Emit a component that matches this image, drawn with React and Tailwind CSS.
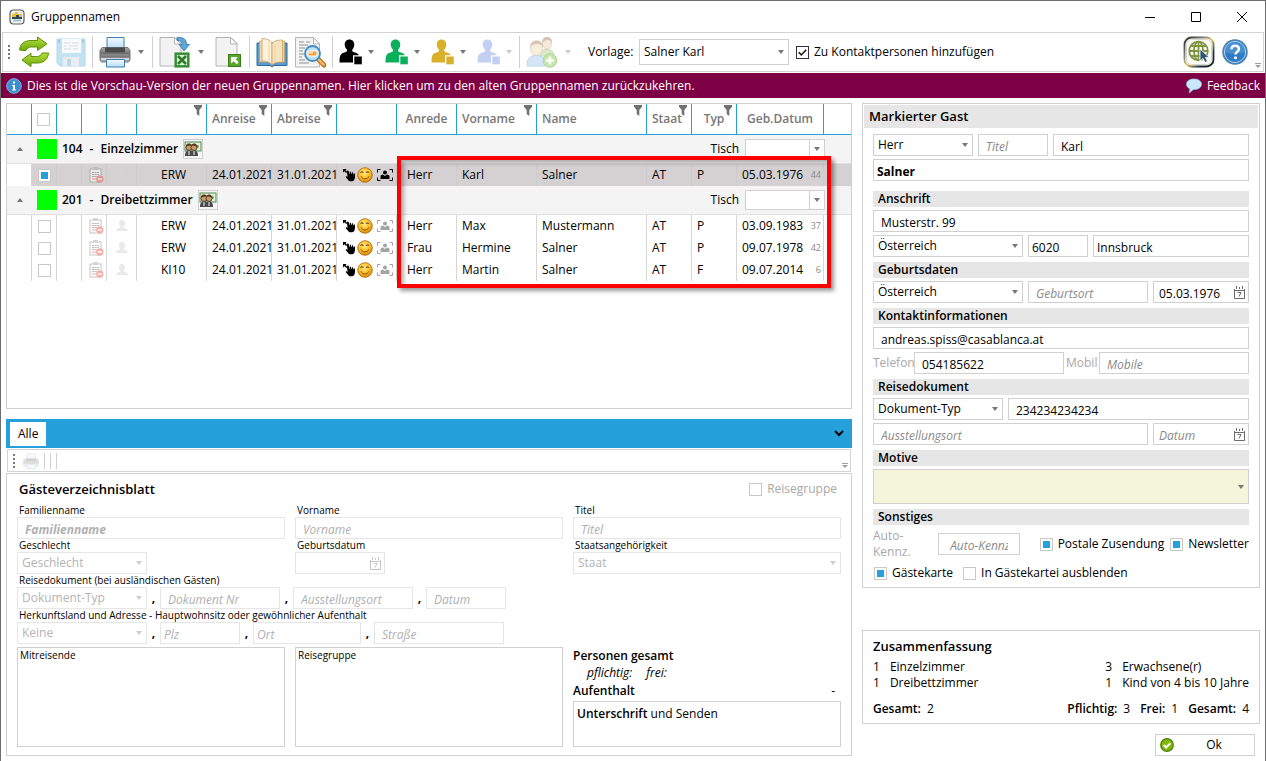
import React from "react";

const cx = (...c) => c.filter(Boolean).join(" ");

/* ---------- icons ---------- */

const Caret = ({ className }) => (
  <svg viewBox="0 0 6 4" className={cx("h-1 w-1.5", className)} fill="currentColor" aria-hidden="true">
    <path d="M0 0h6L3 4z" />
  </svg>
);

const Grip = () => (
  <svg viewBox="0 0 2 14" className="h-3.5 w-0.5 shrink-0 text-[#777]" fill="currentColor" aria-hidden="true">
    <path d="M0 0h2v2H0zM0 4h2v2H0zM0 8h2v2H0zM0 12h2v2H0z" />
  </svg>
);

const Overflow = () => (
  <svg viewBox="0 0 6 6" className="h-1.5 w-1.5 shrink-0 text-[#a0a0a0]" fill="currentColor" aria-hidden="true">
    <path d="M0 0h6v1H0zM0 2h6L3 5z" />
  </svg>
);

const AppIcon = () => (
  <svg viewBox="0 0 16 16" className="h-4 w-4" aria-hidden="true">
    <rect x="1" y="1" width="14" height="14" rx="3.5" fill="#f6f6ee" stroke="#5a5d58" strokeWidth="1.2" />
    <path d="M3 4.5h3V3h3v2h4v3H3z" fill="#e9bf3c" />
    <path d="M3 8h4V6h3v2h3v2H3z" fill="#31485c" />
    <path d="M4 10.5h8v2H4z" fill="#9fc4da" />
    <path d="M10 3h3v2h-3z" fill="#dcebf4" />
  </svg>
);

const RefreshIcon = () => (
  <svg viewBox="0 0 32 32" className="h-8 w-8" aria-hidden="true">
    <defs>
      <linearGradient id="rf" x1="0" y1="0" x2="0" y2="1">
        <stop offset="0" stopColor="#b4dc3c" />
        <stop offset="1" stopColor="#6fa80e" />
      </linearGradient>
    </defs>
    <path d="M1.5 14C2 8 6.500 4.500 13 4.500h6.500V1L29 7.800 19.500 14.500V11h-6c-3 0-4.500 1.200-5.500 3.700z" fill="url(#rf)" stroke="#5b9108" strokeWidth="1" strokeLinejoin="round" />
    <path d="M30.500 17C30 23.500 25.500 27 19.500 27H13v3.700L4 24l9-6.700V20.500h5.500c3 0 4.500-1 5.500-3.500z" fill="url(#rf)" stroke="#5b9108" strokeWidth="1" strokeLinejoin="round" />
  </svg>
);

const SaveIcon = () => (
  <svg viewBox="0 0 30 30" className="h-[30px] w-[30px]" aria-hidden="true">
    <path d="M1 2h28v27H4l-3-3z" fill="#c3e2f2" stroke="#b5d6e8" />
    <path d="M6 2h19v14H6z" fill="#f8fbfd" />
    <path d="M8 6h6M16 6h7M8 9h3M13 9h9M8 12h7M17 12h5" stroke="#d3dde3" />
    <path d="M7 20h16v9H7z" fill="#e9edf0" />
    <path d="M11 22h4v7h-4z" fill="#bcd9e8" />
    <path d="M2 3h2v3H2zM26 3h2v3h-2z" fill="#a2cbe0" />
  </svg>
);

const PrinterIcon = ({ className }) => (
  <svg viewBox="0 0 32 32" className={className} aria-hidden="true">
    <defs>
      <linearGradient id="pg" x1="0" y1="0" x2="0" y2="1">
        <stop offset="0" stopColor="#a9a9a9" />
        <stop offset="0.5" stopColor="#666" />
        <stop offset="1" stopColor="#b5b5b5" />
      </linearGradient>
      <linearGradient id="pp" x1="0" y1="0" x2="0" y2="1">
        <stop offset="0" stopColor="#f4faff" />
        <stop offset="1" stopColor="#b6dcf8" />
      </linearGradient>
    </defs>
    <path d="M8 1.500h17V13H8z" fill="url(#pp)" stroke="#3f7eb2" />
    <path d="M3 11.500h26l2 3v9.500l-1.500 2h-27L1 24v-9.500z" fill="url(#pg)" stroke="#777" />
    <path d="M6 11.500h20v5H6z" fill="#4a4a4a" />
    <path d="M2 18h28v2H2z" fill="#858585" />
    <path d="M2 22h28v2H2z" fill="#d6d6d6" />
    <path d="M7.500 23.500h18V31h-18z" fill="url(#pp)" stroke="#3f7eb2" />
  </svg>
);

const Sheet = () => (
  <>
    <path d="M1 1.500h15l6 6V30H1z" fill="#f3f3f3" stroke="#b4b4b4" />
    <path d="M15.500 1.500v6.500H22z" fill="#fff" stroke="#b4b4b4" />
  </>
);

const ExcelIcon = () => (
  <svg viewBox="0 0 32 32" className="h-8 w-8" aria-hidden="true">
    <Sheet />
    <path d="M18 1.500c7-.5 9.500 2 9.500 7h3L25 15l-5-6.500h3c0-3-1.500-4-5-4z" fill="#5ea6d6" stroke="#2f77ad" strokeWidth=".8" />
    <rect x="16" y="17" width="14" height="14" fill="#3c9a3c" stroke="#2c7c2c" />
    <rect x="18" y="19" width="10" height="10" fill="#fff" opacity=".85" />
    <path d="M19 20l8 8M27 20l-8 8" stroke="#2c7c2c" strokeWidth="2.600" />
  </svg>
);

const SheetArrowIcon = () => (
  <svg viewBox="0 0 28 32" className="h-8 w-7" aria-hidden="true">
    <Sheet />
    <rect x="13.500" y="18.500" width="12" height="12" fill="#5aa62c" stroke="#3b7d1a" />
    <path d="M16 21h7l-2.300 2.300 3 3-1.900 1.900-3-3L16 27.500z" fill="#fff" />
  </svg>
);

const BookIcon = () => (
  <svg viewBox="0 0 32 32" className="h-8 w-8" aria-hidden="true">
    <path d="M1 7h30v22.500H18l-2 1.500-2-1.500H1z" fill="#5a9ccc" stroke="#2d6c9f" />
    <path d="M3.500 5h7v21h-7zM21.500 5h7v21h-7z" fill="#efd7ad" stroke="#c69e63" strokeWidth=".7" />
    <path d="M6 2.500c5 0 8.500 1.500 10 5V29c-2-3-5-4-10-4z" fill="#fbf1dc" stroke="#cfa76d" strokeWidth=".9" />
    <path d="M16 7.500c2-2.500 5-3.500 10.500-3.500v22c-5 0-8.500.5-10.500 3z" fill="#f6e3c0" stroke="#cfa76d" strokeWidth=".9" />
    <path d="M13 6v19M19 7v19" stroke="#ecd3a4" />
  </svg>
);

const SearchSheetIcon = () => (
  <svg viewBox="0 0 32 32" className="h-8 w-8" aria-hidden="true">
    <path d="M1.500 1.500h18l6 6V31h-24z" fill="#f4f4f4" stroke="#b6b6b6" />
    <path d="M19.500 1.500V8h6z" fill="#fff" stroke="#b6b6b6" />
    <path d="M5 6h5M12 6h4M5 9h9M5 12h6M5 15h4M5 18h5M5 21h3M5 24h6M5 27h10" stroke="#8f8f8f" />
    <path d="M24 23l6 6" stroke="#b8701d" strokeWidth="5" strokeLinecap="round" />
    <path d="M24.500 23.500l5 5" stroke="#f3b765" strokeWidth="2.600" strokeLinecap="round" />
    <circle cx="18.500" cy="17.500" r="7.500" fill="#bfe2f6" stroke="#3d8cc4" strokeWidth="1.800" />
    <path d="M14 15h9v5h-9z" fill="#f6a13a" stroke="#fff" />
    <path d="M15 16h4v1.500h-4z" fill="#fde3ba" />
  </svg>
);

const PersonIcon = ({ className }) => (
  <svg viewBox="0 0 24 26" className={cx("h-[26px] w-6", className)} fill="currentColor" aria-hidden="true">
    <path d="M10.500.5c3 0 4.800 2.200 4.800 5 0 2-.8 3.800-2 4.900-.3 1.800.3 2.300 2 2.900 2.400.7 3.700 1.300 4.700 3h-6v7.200H.5c0-3.500.2-5.700 1-7.200 1-1.900 2.600-2.300 4.600-3 1.500-.5 2.100-1.100 1.800-2.900-1.300-1.100-2.200-2.900-2.200-4.900 0-2.800 1.800-5 4.800-5z" />
    <path d="M15.300 17.500h7.500v7.800h-7.500z" />
  </svg>
);

const GroupIcon = () => (
  <svg viewBox="0 0 32 32" className="h-8 w-8 opacity-50" aria-hidden="true">
    <path d="M14 20c0-5 3-6.500 7-6.500s7 2 7 7z" fill="#b6d68c" stroke="#92b964" />
    <ellipse cx="21" cy="7.500" rx="4.500" ry="5.500" fill="#f0d3b1" stroke="#b89a73" strokeWidth=".7" />
    <path d="M16 7c0-4 2-6 5-6s5.500 2 5 6c-1-2-2-3-4-3s-5 1-6 3z" fill="#a98963" />
    <path d="M1 30c0-8 3.500-10.500 9-10.500S20 22 20 30z" fill="#acd1f1" stroke="#7bacd6" />
    <ellipse cx="10.500" cy="12.500" rx="6" ry="7" fill="#f5dcbd" stroke="#b89a73" strokeWidth=".7" />
    <path d="M4 12c0-5 2.500-7.500 6.500-7.500S17.500 7 17 12c-1-3-3-4-6-4s-6 1-7 4z" fill="#b3936a" />
    <circle cx="24" cy="24.500" r="6.800" fill="#93ce5a" stroke="#66a72e" />
    <path d="M24 20.500v8M20 24.500h8" stroke="#fff" strokeWidth="2.600" />
  </svg>
);

const GlobeIcon = () => (
  <svg viewBox="0 0 32 32" className="h-8 w-8" aria-hidden="true">
    <defs>
      <linearGradient id="gf" x1="0" y1="0" x2="1" y2="1">
        <stop offset="0" stopColor="#222" />
        <stop offset=".35" stopColor="#8a8a86" />
        <stop offset=".5" stopColor="#e6c65a" />
        <stop offset=".75" stopColor="#20303c" />
        <stop offset="1" stopColor="#1c1c1c" />
      </linearGradient>
    </defs>
    <rect x="1.500" y="1.500" width="29" height="29" rx="7" fill="#fbfbf8" stroke="url(#gf)" strokeWidth="1.800" />
    <rect x="3.500" y="3.500" width="25" height="25" rx="5" fill="none" stroke="#d8d8d0" />
    <g fill="none" stroke="#7f9440" strokeWidth="1.800">
      <circle cx="15.500" cy="15" r="9.300" />
      <ellipse cx="15.500" cy="15" rx="4.500" ry="9.300" />
      <path d="M15.500 5.500v19M6.200 15h18.600M8 10h15M8 20h15" />
    </g>
    <path d="M17 13v12l3-2.500 2 4 2.500-1.200-2-3.900h3.800z" fill="#2f5876" stroke="#fff" strokeWidth=".8" />
  </svg>
);

const HelpIcon = () => (
  <svg viewBox="0 0 26 26" className="h-[26px] w-[26px]" aria-hidden="true">
    <circle cx="13" cy="13" r="12" fill="#2f7cc4" stroke="#4b83b5" strokeWidth="1.500" />
    <circle cx="13" cy="13" r="10.600" fill="none" stroke="#b5d4ee" strokeWidth="1" />
    <path d="M3 13a10 10 0 0120 0c-6 2-14 2-20 0z" fill="#5c9fd8" opacity=".6" />
    <path d="M9.500 10.300C9.500 8 11 6.700 13.200 6.700s3.700 1.300 3.700 3.300c0 2.800-3.400 2.700-3.400 5.500" fill="none" stroke="#fff" strokeWidth="2.400" />
    <circle cx="13.500" cy="18.800" r="1.500" fill="#fff" />
  </svg>
);

const InfoIcon = () => (
  <svg viewBox="0 0 16 16" className="h-4 w-4" aria-hidden="true">
    <circle cx="8" cy="8" r="7.300" fill="#3b8fd0" stroke="#7fb6e0" />
    <path d="M7 3.500h2v2H7zM6 7h3v4.500h1v1H6v-1h1V8H6z" fill="#fff" />
  </svg>
);

const BubbleIcon = () => (
  <svg viewBox="0 0 16 16" className="h-4 w-4" aria-hidden="true">
    <path d="M8 1c4.500 0 7.500 2 7.500 5.200S12.500 11.500 8 11.500H7.500L3 15l1-4.200C1.800 10 .5 8.500.5 6.200.5 3 3.500 1 8 1z" fill="#c9e8fb" stroke="#8fc3e4" strokeWidth=".7" />
  </svg>
);

const FunnelIcon = () => (
  <svg viewBox="0 0 8 11" className="h-[11px] w-2 text-[#707070]" fill="currentColor" aria-hidden="true">
    <path d="M0 0h8v1.800L5.300 5v6L2.700 9V5L0 1.800z" />
  </svg>
);

const MoneyIcon = () => (
  <svg viewBox="0 0 18 16" className="h-4 w-[18px]" aria-hidden="true">
    <rect x="1" y="1" width="16" height="9" fill="#e4f0dc" stroke="#4f8a4a" />
    <circle cx="13" cy="5.500" r="1.800" fill="#5c9a56" />
    <circle cx="5" cy="6.500" r="3" fill="#c99a67" stroke="#3f2f22" strokeWidth=".8" />
    <circle cx="10" cy="6.500" r="3" fill="#c99a67" stroke="#3f2f22" strokeWidth=".8" />
    <path d="M2 5.500c0-2.500 1.500-3 3-3s2.500.5 2.500 1.500c.5-1 1.500-1.500 2.500-1.500s3 .5 3 3c-3-1.500-8-1.500-11 0z" fill="#5b3a1d" />
    <path d="M1 15c0-4 1.500-5.500 4-5.500s2.500.5 2.500.5.500-.5 2.500-.5c2.800 0 4 1.500 4 5.500z" fill="#4a4a4a" />
    <path d="M5 10v4M10 10v4" stroke="#ddd" strokeWidth="1.200" />
  </svg>
);

const ClipboardIcon = () => (
  <svg viewBox="0 0 15 16" className="h-4 w-[15px] opacity-50" aria-hidden="true">
    <rect x="1" y="2" width="11" height="13" fill="#fff" stroke="#8b8b8b" />
    <path d="M4 0h5v3H4z" fill="#aaa" />
    <path d="M3 5.500h7M3 7.500h7M3 9.500h7" stroke="#777" strokeDasharray="2 .6" />
    <path d="M3 12h5" stroke="#e05050" />
    <circle cx="10.800" cy="12" r="3.700" fill="#e8665a" />
    <path d="M8.700 12h4.200" stroke="#fff" strokeWidth="1.400" />
  </svg>
);

const BustIcon = () => (
  <svg viewBox="0 0 14 12" className="h-3 w-3.5 text-[#d4d4d8] opacity-50" fill="currentColor" aria-hidden="true">
    <path d="M7 0c2 0 3 1.500 3 3.300C10 5 9.300 6 8.500 6.700c0 1.500 4.500 1.300 4.500 4.300H1c0-3 4.500-2.800 4.500-4.300C4.700 6 4 5 4 3.300 4 1.500 5 0 7 0z" />
  </svg>
);

const HandIcon = () => (
  <svg viewBox="0 0 12 13" className="h-[13px] w-3" aria-hidden="true">
    <path d="M0 0h3.500L2.600 1.200 4.200 3l-1 1-1.800-1.700L0 3.500z" />
    <path d="M4.300 1.500c.8-.3 1.400.2 1.600 1L6.300 5l.5-.2V2.700h1.300v2l.7.100.3-1.500 1.100.2v1.700l.5.200.2-1h1c.2 3.400.2 4.600-.7 6.700-.6 1.400-4.400 1.600-5.400.6L3 8.600c-.8-.9 0-1.700.9-1.300l.8.500L3.800 3z" />
  </svg>
);

const SmileIcon = () => (
  <svg viewBox="0 0 16 16" className="h-4 w-4" aria-hidden="true">
    <defs>
      <radialGradient id="sm" cx=".45" cy=".35" r=".65">
        <stop offset="0" stopColor="#ffe98a" />
        <stop offset=".6" stopColor="#fbbc22" />
        <stop offset="1" stopColor="#d98609" />
      </radialGradient>
    </defs>
    <circle cx="8" cy="8" r="7.300" fill="url(#sm)" stroke="#a9650c" strokeWidth=".8" />
    <path d="M3.500 5.500c.7-1.500 2.300-1.500 3 0zM9 5.500c.7-1.500 2.300-1.500 3 0z" fill="#fff" stroke="#6b3f05" strokeWidth=".7" />
    <path d="M4 9.300c1.500 3.500 6.300 3.500 8 0" fill="none" stroke="#8a4c05" strokeWidth="1" />
  </svg>
);

const FaceFrameIcon = ({ muted }) => (
  <svg viewBox="0 0 16 12" className={cx("h-3 w-4", muted ? "text-[#a4a4a4]" : "text-black")} fill="currentColor" aria-hidden="true">
    <path d="M.5 3.500v-3h3M12.500.5h3v3M15.500 8.500v3h-3M3.500 11.500h-3v-3" fill="none" stroke="currentColor" />
    <circle cx="8" cy="3.500" r="2" />
    <path d="M3.500 10V7.500C3.500 6 5 5.700 6 5.500l2 1.500 2-1.500c1.200.2 2.500.5 2.500 2V10z" />
  </svg>
);

const CalendarIcon = ({ muted }) => (
  <svg viewBox="0 0 11 13" className={cx("h-[13px] w-[11px]", muted ? "text-[#c4c4c4]" : "text-[#6c6c6c]")} aria-hidden="true">
    <path d="M.5 3v9.500h10V3M.5 4.500h10M2.500 0v3M5.500 1v2M8.500 0v3" fill="none" stroke="currentColor" />
    <path d="M3.500 6.500h3.500L5 10.500" fill="none" stroke="currentColor" />
  </svg>
);

const OkIcon = () => (
  <svg viewBox="0 0 14 14" className="h-3.5 w-3.5" aria-hidden="true">
    <circle cx="7" cy="7" r="6.300" fill="#7fb800" stroke="#4d7e14" strokeWidth="1.200" />
    <path d="M3.800 7l2.300 2.500 4.200-4.200" fill="none" stroke="#fff" strokeWidth="2" />
  </svg>
);

/* ---------- form controls ---------- */

function Select({ label, value = "", className, disabled, boxed, tall }) {
  return (
    <div
      className={cx(
        "grid items-center border",
        tall ? "h-[35px] bg-[#f5f5dc]" : boxed ? "bg-white" : "h-[22px] bg-white",
        disabled ? "border-[#e6e6e6] text-[#b4b4b4]" : "border-[#d0d0d0]",
        className
      )}
    >
      <select
        aria-label={label}
        disabled={disabled}
        defaultValue={value}
        className="col-start-1 row-start-1 h-full w-full appearance-none bg-transparent px-1 text-inherit outline-none"
      >
        <option value={value}>{value}</option>
      </select>
      <span
        className={cx(
          "pointer-events-none col-start-1 row-start-1 flex items-center justify-self-end",
          boxed === "split" ? "h-full border-l border-[#d0d0d0] px-1" : "pr-1",
          disabled ? "text-[#cdcdcd]" : "text-[#777]"
        )}
      >
        <Caret />
      </span>
    </div>
  );
}

function Field({ label, value, placeholder, className, disabled, indent = "px-[7px]", date, id }) {
  return (
    <div
      className={cx(
        "flex h-[22px] min-w-0 items-center border bg-white",
        disabled ? "border-[#e6e6e6]" : "border-[#d0d0d0]",
        className
      )}
    >
      <input
        id={id}
        aria-label={id ? undefined : label}
        type="text"
        disabled={disabled}
        defaultValue={value}
        placeholder={placeholder}
        className={cx(
          "h-full w-full min-w-0 bg-transparent pt-0.5 outline-none placeholder:italic",
          disabled ? "placeholder:text-[#b0b0b0]" : "placeholder:text-[#8a8a8a]",
          indent
        )}
      />
      {date && (
        <button type="button" aria-label={`${label} wählen`} disabled={disabled} className="shrink-0 pr-[3px]">
          <CalendarIcon muted={disabled} />
        </button>
      )}
    </div>
  );
}

const Box = ({ label, checked, disabled }) => (
  <input
    type="checkbox"
    aria-label={label}
    defaultChecked={checked}
    disabled={disabled}
    className="block h-[13px] w-[13px] shrink-0 appearance-none border border-[#c9c9c9] bg-white checked:bg-[#26a0da] checked:shadow-[inset_0_0_0_2px_#fff]"
  />
);

const Check = ({ label, checked, disabled }) => (
  <label className={cx("flex items-center gap-[5px] whitespace-nowrap", disabled && "text-[#a8a8a8]")}>
    <Box checked={checked} disabled={disabled} />
    {label}
  </label>
);

/* ---------- toolbar ---------- */

const ToolButton = ({ label, children, disabled }) => (
  <button type="button" aria-label={label} disabled={disabled} className="flex shrink-0 items-center justify-center">
    {children}
  </button>
);

const Drop = ({ label, muted }) => (
  <button type="button" aria-label={label} disabled={muted} className={cx("flex w-2 shrink-0 justify-center", muted ? "text-[#ccc]" : "text-[#777]")}>
    <Caret />
  </button>
);

const Sep = () => <span className="h-8 w-px shrink-0 bg-[#d0d0d0]" />;

function Toolbar() {
  const people = [
    ["Schwarz", "text-black"],
    ["Grün", "text-[#0bb05c]"],
    ["Gold", "text-[#d9b02c]"],
    ["Blau", "text-[#c3d0f3]"],
  ];
  return (
    <div className="mx-px flex h-10 items-center border border-[#d3d3d3] pl-[5px]">
      <Grip />
      <div className="ml-2 flex items-center gap-1.5">
        <ToolButton label="Aktualisieren"><RefreshIcon /></ToolButton>
        <ToolButton label="Speichern" disabled><SaveIcon /></ToolButton>
        <Sep />
        <ToolButton label="Drucken"><PrinterIcon className="h-8 w-8" /></ToolButton>
        <Drop label="Druckoptionen" />
      </div>
      <div className="ml-[7px] flex items-center gap-1.5">
        <Sep />
        <ToolButton label="Excel-Export"><ExcelIcon /></ToolButton>
        <Drop label="Exportoptionen" />
      </div>
      <div className="ml-2.5 flex items-center gap-1.5">
        <ToolButton label="Vorlage öffnen"><SheetArrowIcon /></ToolButton>
        <Sep />
        <ToolButton label="Gästebuch"><BookIcon /></ToolButton>
        <ToolButton label="Vorschau"><SearchSheetIcon /></ToolButton>
        <Sep />
      </div>
      <div className="ml-1.5 flex items-center gap-2.5">
        {people.map(([name, color], i) => (
          <div key={name} className="flex items-center gap-1">
            <ToolButton label={`Person ${name}`} disabled={i === 3}><PersonIcon className={color} /></ToolButton>
            <Drop label={`Optionen ${name}`} muted={i === 3} />
          </div>
        ))}
      </div>
      <div className="ml-1.5 flex items-center gap-1.5">
        <Sep />
        <ToolButton label="Gruppe hinzufügen" disabled><GroupIcon /></ToolButton>
        <Drop label="Gruppenoptionen" muted />
      </div>
      <span className="ml-4 w-[51px]">Vorlage:</span>
      <Select label="Vorlage" value="Salner Karl" boxed className="h-[26px] w-[150px]" />
      <label className="ml-[7px] flex items-center gap-[5px] whitespace-nowrap">
        <span className="grid">
          <input type="checkbox" defaultChecked className="peer col-start-1 row-start-1 block h-[13px] w-[13px] appearance-none border border-[#333] bg-white" />
          <svg viewBox="0 0 13 13" className="pointer-events-none invisible col-start-1 row-start-1 h-[13px] w-[13px] peer-checked:visible" aria-hidden="true">
            <path d="M2.800 6.300l2.500 2.700 4.900-5.200" fill="none" stroke="#111" strokeWidth="1.500" />
          </svg>
        </span>
        Zu Kontaktpersonen hinzufügen
      </label>
      <div className="ml-auto flex h-full items-center gap-[7px]">
        <ToolButton label="Online"><GlobeIcon /></ToolButton>
        <ToolButton label="Hilfe"><HelpIcon /></ToolButton>
        <span className="self-end pb-0.5 pr-0.5"><Overflow /></span>
      </div>
    </div>
  );
}

/* ---------- guest table ---------- */

const columns = [
  { w: "w-[25px]" },
  { w: "w-[25px]", box: true },
  { w: "w-[25px]" },
  { w: "w-[25px]" },
  { w: "w-[30px]" },
  { w: "w-[70px]", filter: true },
  { w: "w-[65px]", title: "Anreise", filter: true },
  { w: "w-[65px]", title: "Abreise", filter: true },
  { w: "w-[60px]" },
  { w: "w-[60px]", title: "Anrede", center: true },
  { w: "w-[80px]", title: "Vorname", filter: true },
  { w: "w-[110px]", title: "Name", filter: true },
  { w: "w-[45px]", title: "Staat", filter: true },
  { w: "w-[45px]", title: "Typ", filter: true, center: true },
  { w: "w-[87px]", title: "Geb.Datum", center: true },
  { w: "", last: true },
];

const groups = [
  {
    no: "104",
    room: "Einzelzimmer",
    guests: [{ kind: "ERW", s: "Herr", v: "Karl", n: "Salner", t: "P", d: "05.03.1976", age: 44, selected: true }],
  },
  {
    no: "201",
    room: "Dreibettzimmer",
    guests: [
      { kind: "ERW", s: "Herr", v: "Max", n: "Mustermann", t: "P", d: "03.09.1983", age: 37 },
      { kind: "ERW", s: "Frau", v: "Hermine", n: "Salner", t: "P", d: "09.07.1978", age: 42 },
      { kind: "KI10", s: "Herr", v: "Martin", n: "Salner", t: "F", d: "09.07.2014", age: 6 },
    ],
  },
];

function GuestRow({ g }) {
  const bg = g.selected ? "bg-[#d5d1d2]" : "";
  const line = g.selected ? "border-r border-[#cfcbcc]" : "border-r border-[#d6d6d6]";
  const td = cx("h-[22px] p-0", bg, line);
  return (
    <tr>
      <td className="border-r border-[#d6d6d6] p-0" />
      <td className={cx(td, "pl-1.5")}><Box label={`${g.v} ${g.n} auswählen`} checked={g.selected} /></td>
      <td className={td} />
      <td className={cx(td, "pl-[7px]")}><ClipboardIcon /></td>
      <td className={cx(td, "pl-2")}><BustIcon /></td>
      <td className={cx(td, "pl-6")}>{g.kind}</td>
      <td className={cx(td, "pl-[5px]")}>24.01.2021</td>
      <td className={cx(td, "pl-[5px]")}>31.01.2021</td>
      <td className={cx(td, "pl-1.5")}>
        <div className="flex items-center gap-0.5">
          <HandIcon />
          <SmileIcon />
          <span className="pl-0.5"><FaceFrameIcon muted={!g.selected} /></span>
        </div>
      </td>
      <td className={cx(td, "pl-2.5")}>{g.s}</td>
      <td className={cx(td, "pl-[5px]")}>{g.v}</td>
      <td className={cx(td, "pl-[5px]")}>{g.n}</td>
      <td className={cx(td, "pl-[5px]")}>AT</td>
      <td className={cx(td, "pl-[5px]")}>{g.t}</td>
      <td className={cx(td, "pl-[5px] pr-0.5")}>
        <div className="flex items-center justify-between">
          {g.d}
          <span className="text-[9px] text-[#8a8a8a]">{g.age}</span>
        </div>
      </td>
      <td className={cx("p-0", bg)} />
    </tr>
  );
}

function GuestTable() {
  return (
    <div className="relative min-h-[306px] flex-1 border border-[#d0d0d0]">
      <table className="w-full table-fixed border-separate border-spacing-0 text-left">
        <colgroup>
          {columns.map((c, i) => <col key={i} className={c.w} />)}
        </colgroup>
        <thead>
          <tr>
            {columns.map((c, i) => (
              <th
                key={i}
                className={cx(
                  "relative h-[31px] border-b border-[#26a0da] p-0 font-semibold text-[#777]",
                  !c.last && "border-r",
                  c.box ? "pl-[5px]" : c.center ? "text-center" : "pl-[5px]"
                )}
              >
                {c.box ? <Box label="Alle auswählen" /> : c.title}
                {c.filter && (
                  <button type="button" aria-label={`${c.title || "Art"} filtern`} className="absolute right-1 top-px">
                    <FunnelIcon />
                  </button>
                )}
              </th>
            ))}
          </tr>
        </thead>
        {groups.map((grp) => (
          <tbody key={grp.no}>
            <tr className="bg-[#f4f4f4]">
              <td className="h-[29px] border-b border-[#e0e0e0] p-0">
                <button type="button" aria-label={`${grp.room} einklappen`} className="flex w-full justify-center text-[#777]">
                  <Caret className="rotate-180" />
                </button>
              </td>
              <td colSpan={15} className="border-b border-[#e0e0e0] p-0">
                <div className="flex items-center pl-[5px] pr-[26px]">
                  <span className="h-5 w-5 bg-[#00ff00]" />
                  <span className="ml-[5px] flex gap-[7px] font-semibold">
                    <span>{grp.no}</span>
                    <span>-</span>
                    <span>{grp.room}</span>
                  </span>
                  <button type="button" aria-label="Rechnung" className="ml-[5px] flex h-5 w-5 items-center justify-center border border-[#d0d0d0] bg-[#f6f6f6]">
                    <MoneyIcon />
                  </button>
                  <span className="ml-auto mr-1.5">Tisch</span>
                  <Select label={`Tisch ${grp.no}`} boxed="split" className="h-5 w-20" />
                </div>
              </td>
            </tr>
            {grp.guests.map((g) => <GuestRow key={g.v} g={g} />)}
          </tbody>
        ))}
      </table>
      <div className="pointer-events-none absolute left-[390px] top-[52px] h-[132px] w-[434px] border-4 border-[#ff0000] shadow-[3px_3px_4px_rgba(0,0,0,0.4),inset_3px_3px_4px_rgba(0,0,0,0.3)]" />
    </div>
  );
}

/* ---------- registration form ---------- */

const Caption = ({ children }) => <div className="h-[13px] whitespace-nowrap pl-0.5 text-[10px] leading-[13px]">{children}</div>;

const Comma = () => <span className="w-[13px] shrink-0 text-center font-bold">,</span>;

function RegistrationForm() {
  return (
    <section className="mt-px border border-[#d0d0d0] px-2.5 pb-2">
      <div className="flex h-[30px] items-center justify-between pl-0.5 pr-1">
        <h2 className="text-[13px] font-semibold">Gästeverzeichnisblatt</h2>
        <Check label="Reisegruppe" disabled />
      </div>
      <div className="grid grid-cols-3 gap-x-2.5">
        <div>
          <Caption>Familienname</Caption>
          <Field label="Familienname" placeholder="Familienname" disabled className="font-bold" />
        </div>
        <div>
          <Caption>Vorname</Caption>
          <Field label="Vorname" placeholder="Vorname" disabled />
        </div>
        <div>
          <Caption>Titel</Caption>
          <Field label="Titel" placeholder="Titel" disabled />
        </div>
        <div>
          <Caption>Geschlecht</Caption>
          <Select label="Geschlecht" value="Geschlecht" disabled className="w-[130px]" />
        </div>
        <div>
          <Caption>Geburtsdatum</Caption>
          <Field label="Geburtsdatum" date disabled className="w-[90px]" />
        </div>
        <div>
          <Caption>Staatsangehörigkeit</Caption>
          <Select label="Staatsangehörigkeit" value="Staat" disabled />
        </div>
      </div>
      <Caption>Reisedokument (bei ausländischen Gästen)</Caption>
      <div className="flex items-center">
        <Select label="Dokument-Typ" value="Dokument-Typ" disabled className="w-[130px]" />
        <Comma />
        <Field label="Dokument Nr" placeholder="Dokument Nr" disabled className="w-[120px]" />
        <Comma />
        <Field label="Ausstellungsort" placeholder="Ausstellungsort" disabled className="w-[120px]" />
        <Comma />
        <Field label="Datum" placeholder="Datum" disabled className="w-20" />
      </div>
      <Caption>Herkunftsland und Adresse - Hauptwohnsitz oder gewöhnlicher Aufenthalt</Caption>
      <div className="flex items-center">
        <Select label="Herkunftsland" value="Keine" disabled className="w-[130px]" />
        <Comma />
        <Field label="Plz" placeholder="Plz" disabled indent="px-[3px]" className="w-20" />
        <Comma />
        <Field label="Ort" placeholder="Ort" disabled indent="px-[3px]" className="w-[108px]" />
        <Comma />
        <Field label="Straße" placeholder="Straße" disabled className="w-[130px]" />
      </div>
      <div className="mt-[3px] grid min-h-[100px] grid-cols-3 gap-x-2.5">
        <div className="border border-[#d0d0d0] pl-0.5 pt-px text-[10px] leading-[13px]">Mitreisende</div>
        <div className="border border-[#d0d0d0] pl-0.5 pt-px text-[10px] leading-[13px]">Reisegruppe</div>
        <div className="flex flex-col">
          <div className="font-semibold leading-[18px]">Personen gesamt</div>
          <div className="flex gap-3.5 pl-3.5 italic leading-4">
            <span>pflichtig:</span>
            <span>frei:</span>
          </div>
          <div className="flex justify-between pr-1.5 leading-5">
            <span className="font-semibold">Aufenthalt</span>
            <span>-</span>
          </div>
          <div className="flex-1 border border-[#d0d0d0] px-[3px] pt-1 leading-4">
            <span className="font-semibold">Unterschrift</span> und Senden
          </div>
        </div>
      </div>
    </section>
  );
}

/* ---------- selected guest ---------- */

const Section = ({ title, children, first }) => (
  <section className={cx("flex flex-col gap-[3px]", first ? "mt-2.5" : "mt-[5px]")}>
    <h3 className="h-4 bg-[#e6e6e6] pl-[5px] text-xs font-semibold leading-4">{title}</h3>
    {children}
  </section>
);

const Row = ({ children }) => <div className="flex items-center gap-[5px]">{children}</div>;

function GuestPanel() {
  return (
    <section className="border border-[#d0d0d0] p-px pb-1">
      <h2 className="h-[23px] bg-[#e6e6e6] pl-[5px] text-[13px] font-semibold leading-[23px]">Markierter Gast</h2>
      <div className="px-[9px] pt-1.5">
        <div className="flex flex-col gap-[3px]">
          <Row>
            <Select label="Anrede" value="Herr" className="w-[100px]" />
            <Field label="Titel" placeholder="Titel" className="w-[70px]" />
            <Field label="Vorname" value="Karl" className="flex-1" />
          </Row>
          <Field label="Name" value="Salner" indent="px-[3px]" className="font-bold" />
        </div>
        <Section title="Anschrift" first>
          <Field label="Straße" value="Musterstr. 99" />
          <Row>
            <Select label="Land" value="Österreich" className="w-[150px]" />
            <Field label="Postleitzahl" value="6020" indent="px-[3px]" className="w-[60px]" />
            <Field label="Ort" value="Innsbruck" indent="px-[3px]" className="flex-1" />
          </Row>
        </Section>
        <Section title="Geburtsdaten">
          <Row>
            <Select label="Geburtsland" value="Österreich" className="w-[150px]" />
            <Field label="Geburtsort" placeholder="Geburtsort" className="flex-1" />
            <Field label="Geburtsdatum" value="05.03.1976" date indent="pl-[5px]" className="w-24" />
          </Row>
        </Section>
        <Section title="Kontaktinformationen">
          <Field label="E-Mail" value="andreas.spiss@casablanca.at" />
          <div className="flex items-center">
            <label htmlFor="tel" className="w-[41px] text-[#a8a8a8]">Telefon</label>
            <Field id="tel" value="054185622" className="flex-1" />
            <label htmlFor="mob" className="w-[35px] pl-0.5 text-[#a8a8a8]">Mobil</label>
            <Field id="mob" placeholder="Mobile" className="flex-1" />
          </div>
        </Section>
        <Section title="Reisedokument">
          <Row>
            <Select label="Dokument-Typ" value="Dokument-Typ" className="w-[130px]" />
            <Field label="Dokumentnummer" value="234234234234" className="flex-1" />
          </Row>
          <Row>
            <Field label="Ausstellungsort" placeholder="Ausstellungsort" className="flex-1" />
            <Field label="Ausstellungsdatum" placeholder="Datum" date indent="pl-[5px]" className="w-24" />
          </Row>
        </Section>
        <Section title="Motive">
          <Select label="Motive" tall />
        </Section>
        <Section title="Sonstiges">
          <div className="flex items-center">
            <label htmlFor="kennz" className="w-[68px] text-[#a8a8a8]">Auto-Kennz.</label>
            <Field id="kennz" placeholder="Auto-Kennz" indent="px-[11px]" className="w-[85px]" />
            <div className="ml-5 flex flex-1 items-center gap-1.5">
              <Check label="Postale Zusendung" checked />
              <Check label="Newsletter" checked />
            </div>
          </div>
          <div className="flex h-5 items-center gap-2.5 pl-px">
            <Check label="Gästekarte" checked />
            <Check label="In Gästekartei ausblenden" />
          </div>
        </Section>
      </div>
    </section>
  );
}

function Summary() {
  return (
    <section className="mt-auto border border-[#d0d0d0] px-2.5 pb-1 pt-1.5">
      <h2 className="text-[13px] font-semibold leading-[18px]">Zusammenfassung</h2>
      <div className="mt-1 flex justify-between leading-4">
        <ul>
          <li className="flex gap-2.5"><span>1</span>Einzelzimmer</li>
          <li className="flex gap-2.5"><span>1</span>Dreibettzimmer</li>
        </ul>
        <ul>
          <li className="flex gap-2.5"><span>3</span>Erwachsene(r)</li>
          <li className="flex gap-2.5"><span>1</span>Kind von 4 bis 10 Jahre</li>
        </ul>
      </div>
      <div className="mt-2 flex justify-between leading-5">
        <div className="flex gap-1.5"><b className="font-semibold">Gesamt:</b>2</div>
        <div className="flex gap-2.5">
          <span className="flex gap-1.5"><b className="font-semibold">Pflichtig:</b>3</span>
          <span className="flex gap-1.5"><b className="font-semibold">Frei:</b>1</span>
          <span className="flex gap-1.5"><b className="font-semibold">Gesamt:</b>4</span>
        </div>
      </div>
    </section>
  );
}

/* ---------- window ---------- */

export default function App() {
  return (
    <div className="flex min-h-screen flex-col border border-[#6e6e6e] bg-white font-['Open_Sans','Noto_Sans',sans-serif] text-xs leading-4 text-black">
      <header className="flex h-[31px] items-center pl-2">
        <AppIcon />
        <h1 className="ml-1.5">Gruppennamen</h1>
        <div className="ml-auto flex h-full">
          <button type="button" aria-label="Minimieren" className="flex w-[46px] items-center justify-center">
            <svg viewBox="0 0 10 10" className="h-2.5 w-2.5" aria-hidden="true"><path d="M0 5.500h10" stroke="#000" /></svg>
          </button>
          <button type="button" aria-label="Maximieren" className="flex w-[46px] items-center justify-center">
            <svg viewBox="0 0 10 10" className="h-2.5 w-2.5" aria-hidden="true"><path d="M.5.5h9v9h-9z" fill="none" stroke="#000" /></svg>
          </button>
          <button type="button" aria-label="Schließen" className="flex w-[46px] items-center justify-center">
            <svg viewBox="0 0 10 10" className="h-2.5 w-2.5" aria-hidden="true"><path d="M0 0l10 10M10 0L0 10" stroke="#000" /></svg>
          </button>
        </div>
      </header>
      <Toolbar />
      <div className="mt-px flex h-[25px] items-center justify-between bg-[#7d0045] pl-[5px] pr-[5px] text-white">
        <a href="#alt" className="flex items-center gap-[5px]">
          <InfoIcon />
          Dies ist die Vorschau-Version der neuen Gruppennamen. Hier klicken um zu den alten Gruppennamen zurückzukehren.
        </a>
        <a href="#feedback" className="flex items-center gap-[5px]">
          <BubbleIcon />
          Feedback
        </a>
      </div>
      <main className="flex flex-1 gap-2.5 p-[5px]">
        <div className="flex min-w-0 flex-1 flex-col">
          <GuestTable />
          <div className="mt-2.5 flex h-[29px] items-center justify-between bg-[#26a0da] px-1">
            <button type="button" className="h-6 bg-white px-2">Alle</button>
            <button type="button" aria-label="Einklappen" className="px-1">
              <svg viewBox="0 0 10 7" className="h-[7px] w-2.5" aria-hidden="true"><path d="M1 1l4 4 4-4" fill="none" stroke="#000" strokeWidth="2" /></svg>
            </button>
          </div>
          <div className="mx-px mt-px flex h-[23px] items-center border border-[#d3d3d3] pl-[5px]">
            <Grip />
            <button type="button" aria-label="Drucken" disabled className="ml-2 opacity-25"><PrinterIcon className="h-4 w-4" /></button>
            <span className="ml-[5px] flex gap-[5px]">
              <span className="h-4 w-px bg-[#d0d0d0]" />
              <span className="h-4 w-px bg-[#d0d0d0]" />
              <span className="h-4 w-px bg-[#d0d0d0]" />
            </span>
            <span className="ml-auto self-end pb-0.5 pr-0.5"><Overflow /></span>
          </div>
          <RegistrationForm />
        </div>
        <div className="flex w-[398px] shrink-0 flex-col">
          <GuestPanel />
          <Summary />
          <button type="button" className="mt-2.5 mr-[5px] flex h-[22px] w-[100px] items-center self-end border border-[#d0d0d0] bg-white pl-1 pr-4">
            <OkIcon />
            <span className="flex-1 pl-4 text-center">Ok</span>
          </button>
        </div>
      </main>
    </div>
  );
}
